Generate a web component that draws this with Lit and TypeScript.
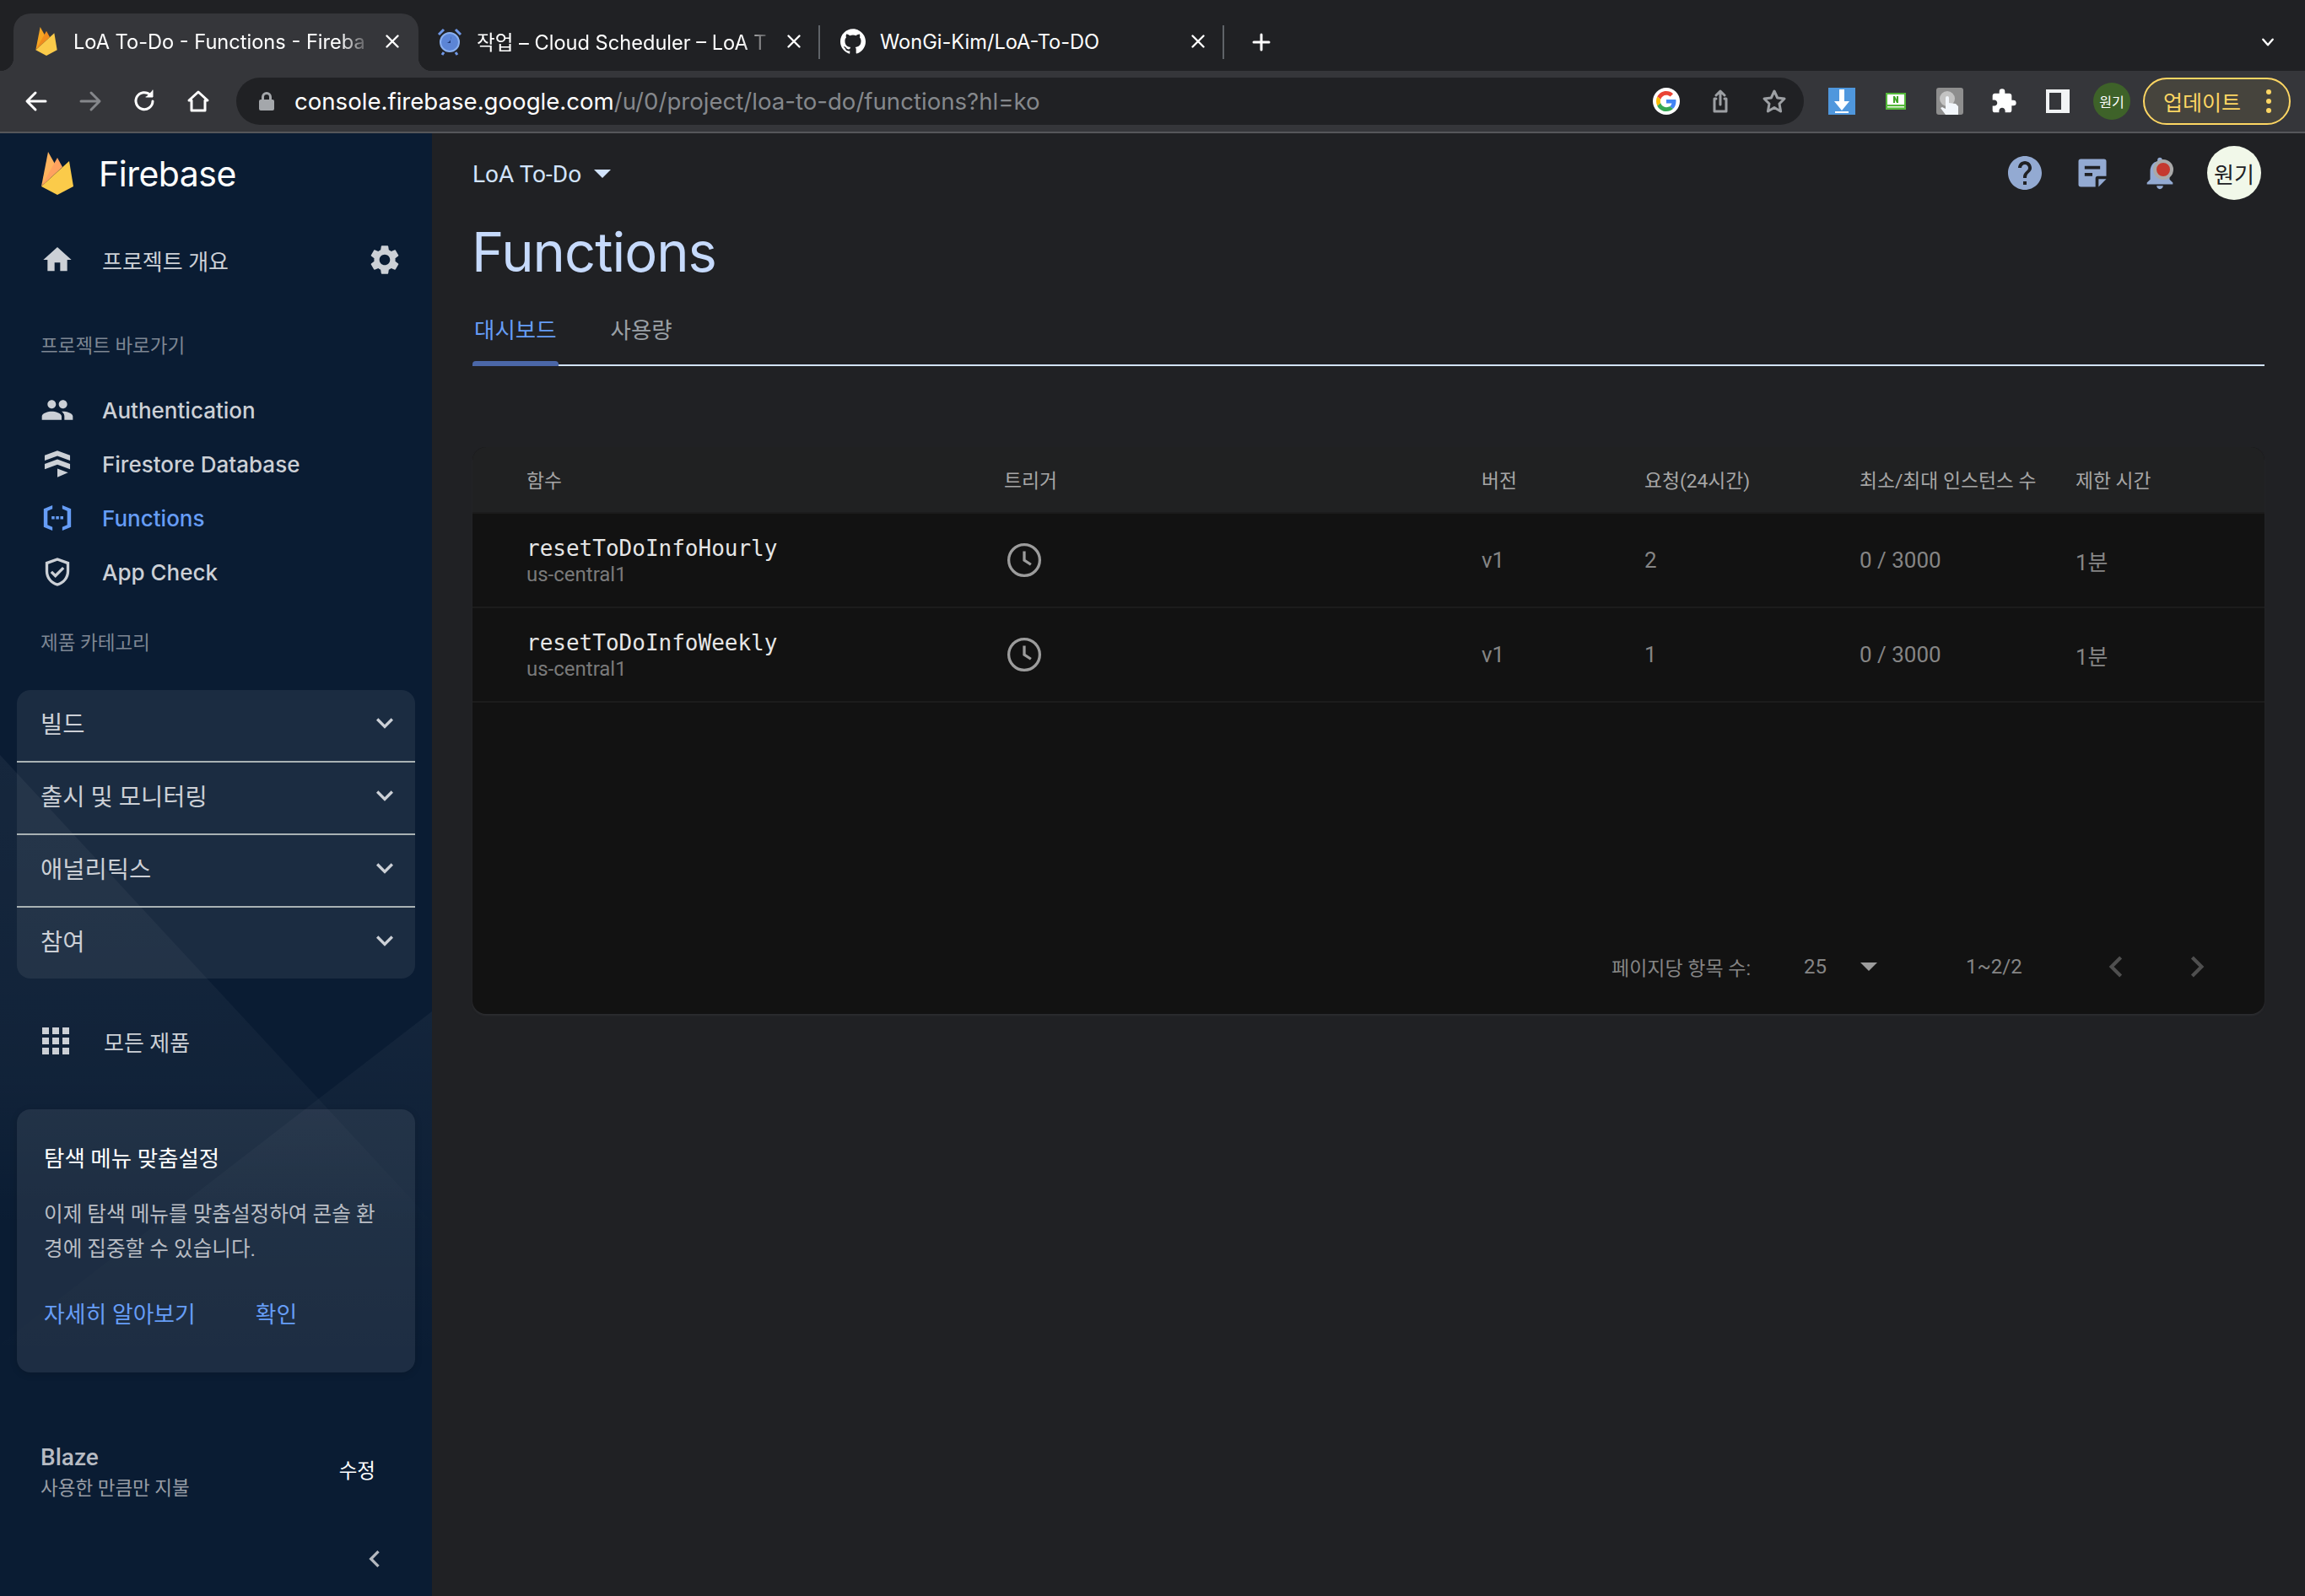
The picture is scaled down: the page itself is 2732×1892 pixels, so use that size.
import { LitElement, css, html, svg } from "lit";
import { customElement } from "lit/decorators.js";

const P = {
  home: "M10 20v-6h4v6h5v-8h3L12 3 2 12h3v8z",
  gear: "M19.14 12.94c.04-.3.06-.61.06-.94 0-.32-.02-.64-.07-.94l2.03-1.58c.18-.14.23-.41.12-.61l-1.92-3.32c-.12-.22-.37-.29-.59-.22l-2.39.96c-.5-.38-1.03-.7-1.62-.94l-.36-2.54c-.04-.24-.24-.41-.48-.41h-3.84c-.24 0-.43.17-.47.41l-.36 2.54c-.59.24-1.13.57-1.62.94l-2.39-.96c-.22-.08-.47 0-.59.22L2.74 8.87c-.12.21-.08.47.12.61l2.03 1.58c-.05.3-.09.63-.09.94s.02.64.07.94l-2.03 1.58c-.18.14-.23.41-.12.61l1.92 3.32c.12.22.37.29.59.22l2.39-.96c.5.38 1.03.7 1.62.94l.36 2.54c.05.24.24.41.48.41h3.84c.24 0 .44-.17.47-.41l.36-2.54c.59-.24 1.13-.56 1.62-.94l2.39.96c.22.08.47 0 .59-.22l1.92-3.32c.12-.22.07-.47-.12-.61l-2.01-1.58zM12 15.6c-1.98 0-3.6-1.62-3.6-3.6s1.62-3.6 3.6-3.6 3.6 1.62 3.6 3.6-1.62 3.6-3.6 3.6z",
  people: "M16 11c1.66 0 2.99-1.34 2.99-3S17.66 5 16 5c-1.66 0-3 1.34-3 3s1.34 3 3 3zm-8 0c1.66 0 2.99-1.34 2.99-3S9.66 5 8 5C6.34 5 5 6.34 5 8s1.34 3 3 3zm0 2c-2.33 0-7 1.17-7 3.5V19h14v-2.5c0-2.33-4.67-3.5-7-3.5zm8 0c-.29 0-.62.02-.97.05 1.16.84 1.97 1.97 1.97 3.45V19h6v-2.5c0-2.33-4.67-3.5-7-3.5z",
  firestore: "M12 2l9.500 3.600v3.900L12 6 2.500 9.500V5.600zM12 8.500l9.500 3.500v4L12 12.500 2.500 16v-4zM12 15.500l8 3L12 22z",
  functions: "M8.500 3v2.600L5 7v10l3.500 1.400V21l-6.200-2.500v-13zM15.500 3l6.200 2.500v13L15.500 21v-2.600L19 17V7l-3.500-1.400zM7.900 10.800h2.100v2.100H7.900zM11 10.800h2.100v2.100H11zM14.100 10.800h2.100v2.100h-2.100z",
  shield: "M12 2L3.500 5v6.500c0 5 3.600 9.200 8.500 10.500 4.900-1.300 8.500-5.500 8.500-10.500V5zm6.500 9.500c0 4-2.800 7.400-6.500 8.500-3.700-1.100-6.500-4.500-6.500-8.500V6.400L12 4.100l6.500 2.300zM8.400 11.200L7 12.600l3.600 3.600 6.400-6.400-1.400-1.400-5 5z",
  expand: "M16.590 8.590L12 13.170 7.410 8.590 6 10l6 6 6-6z",
  left: "M15.410 7.410L14 6l-6 6 6 6 1.410-1.410L10.830 12z",
  right: "M10 6L8.590 7.410 13.170 12l-4.580 4.590L10 18l6-6z",
  help: "M12 2C6.480 2 2 6.480 2 12s4.480 10 10 10 10-4.480 10-10S17.520 2 12 2zm1 17h-2v-2h2v2zm2.070-7.750l-.9.920C13.450 12.900 13 13.500 13 15h-2v-.5c0-1.100.450-2.100 1.170-2.830l1.240-1.260c.370-.360.590-.860.590-1.410 0-1.100-.9-2-2-2s-2 .9-2 2H8c0-2.210 1.790-4 4-4s4 1.790 4 4c0 .880-.360 1.680-.930 2.250z",
  note: "M4.500 3h15A1.500 1.500 0 0 1 21 4.500V14h-5.500A1.500 1.500 0 0 0 14 15.500V21H4.500A1.500 1.500 0 0 1 3 19.500v-15A1.500 1.500 0 0 1 4.500 3zM7 7.500v2h10v-2zM7 12v2h5v-2zM16 16h5l-5 5z",
  bell: "M12 22c1.100 0 2-.9 2-2h-4c0 1.100.9 2 2 2zm6-6v-5c0-3.070-1.630-5.640-4.500-6.320V4c0-.830-.670-1.500-1.500-1.500s-1.500.670-1.500 1.500v.680C7.640 5.360 6 7.920 6 11v5l-2 2v1h16v-1l-2-2z",
  github: "M12 .297c-6.630 0-12 5.373-12 12 0 5.303 3.438 9.800 8.205 11.385.6.113.82-.258.82-.577 0-.285-.01-1.040-.015-2.040-3.338.724-4.042-1.610-4.042-1.610C4.422 18.070 3.633 17.700 3.633 17.700c-1.087-.744.084-.729.084-.729 1.205.084 1.838 1.236 1.838 1.236 1.070 1.835 2.809 1.305 3.495.998.108-.776.417-1.305.76-1.605-2.665-.3-5.466-1.332-5.466-5.930 0-1.310.465-2.380 1.235-3.220-.135-.303-.54-1.523.105-3.176 0 0 1.005-.322 3.300 1.230.96-.267 1.980-.399 3-.405 1.020.006 2.040.138 3 .405 2.280-1.552 3.285-1.230 3.285-1.230.645 1.653.24 2.873.12 3.176.765.84 1.230 1.910 1.230 3.220 0 4.610-2.805 5.625-5.475 5.920.42.36.81 1.096.81 2.220 0 1.606-.015 2.896-.015 3.286 0 .315.21.69.825.57C20.565 22.092 24 17.592 24 12.297c0-6.627-5.373-12-12-12",
  puzzle: "M20.500 11H19V7c0-1.100-.9-2-2-2h-4V3.500a2.500 2.500 0 0 0-5 0V5H4c-1.100 0-2 .9-2 2v3.800h1.500c1.490 0 2.700 1.210 2.700 2.700s-1.210 2.700-2.700 2.700H2V20c0 1.100.9 2 2 2h3.800v-1.500c0-1.490 1.210-2.700 2.700-2.700s2.700 1.210 2.700 2.700V22H17c1.100 0 2-.9 2-2v-4h1.500a2.500 2.500 0 0 0 0-5z",
};

const icon = (d: string, size: number, color = "currentColor") => html`<svg
  width=${size}
  height=${size}
  viewBox="0 0 24 24"
  fill=${color}
>
  <path d=${d}></path>
</svg>`;

const flame = (w: number, h: number, dim = false) => html`<svg width=${w} height=${h} viewBox="0 0 38 51">
  <path d="M0 41L8 0l9 16z" fill=${dim ? "#f6a623" : "#ffb45e"}></path>
  <path d="M0 41L19 7l6 11z" fill=${dim ? "#f08c1d" : "#ffa25f"}></path>
  <path d="M0 41L33 11l5 30-19 10z" fill="#fbcb4a"></path>
</svg>`;

const googleG = html`<svg width="24" height="24" viewBox="0 0 48 48">
  <path fill="#EA4335" d="M24 9.500c3.540 0 6.710 1.220 9.210 3.600l6.850-6.850C35.900 2.380 30.470 0 24 0 14.620 0 6.510 5.380 2.560 13.220l7.980 6.190C12.430 13.720 17.740 9.500 24 9.500z"></path>
  <path fill="#4285F4" d="M46.980 24.550c0-1.570-.15-3.090-.38-4.550H24v9.020h12.940c-.58 2.960-2.260 5.480-4.780 7.180l7.730 6c4.510-4.180 7.090-10.360 7.090-17.650z"></path>
  <path fill="#FBBC05" d="M10.530 28.590c-.48-1.450-.76-2.990-.76-4.590s.27-3.140.76-4.590l-7.980-6.190C.92 16.460 0 20.120 0 24c0 3.880.92 7.540 2.560 10.780l7.970-6.190z"></path>
  <path fill="#34A853" d="M24 48c6.480 0 11.930-2.130 15.890-5.810l-7.730-6c-2.150 1.450-4.920 2.300-8.160 2.300-6.260 0-11.570-4.220-13.470-9.910l-7.980 6.190C6.510 42.620 14.620 48 24 48z"></path>
</svg>`;

const stroke = (body: unknown, size = 32) => html`<svg
  width=${size}
  height=${size}
  viewBox="0 0 32 32"
  fill="none"
  stroke="currentColor"
  stroke-width="3"
  stroke-linecap="round"
  stroke-linejoin="round"
>
  ${body}
</svg>`;

const closeIcon = () => stroke(svg`<path d="M8 8l16 16M24 8L8 24"></path>`, 26);

const SHORTCUTS = [
  { label: "Authentication", path: P.people, size: 40 },
  { label: "Firestore Database", path: P.firestore, size: 38 },
  { label: "Functions", path: P.functions, size: 46, active: true },
  { label: "App Check", path: P.shield, size: 42 },
];
const CATEGORIES = ["빌드", "출시 및 모니터링", "애널리틱스", "참여"];
const COLUMNS = ["함수", "트리거", "버전", "요청(24시간)", "최소/최대 인스턴스 수", "제한 시간"];
const FUNCTIONS = [
  { name: "resetToDoInfoHourly", requests: "2" },
  { name: "resetToDoInfoWeekly", requests: "1" },
];

@customElement("app-root")
export class AppRoot extends LitElement {
  static styles = css`
    :host {
      display: block;
      width: 2732px;
      height: 1892px;
      overflow: hidden;
      background: #202124;
      font-family: Roboto, "Noto Sans CJK KR", sans-serif;
      color: #e8eaed;
    }
    button {
      all: unset;
      display: flex;
      align-items: center;
      justify-content: center;
    }

    /* browser chrome */
    .tabstrip {
      height: 84px;
      display: flex;
      align-items: flex-end;
      padding-left: 16px;
      background: #202124;
      color: #fff;
      font-family: Inter, "Noto Sans CJK KR", sans-serif;
      font-size: 23.6px;
    }
    .tab {
      position: relative;
      box-sizing: border-box;
      height: 68px;
      width: 476px;
      display: flex;
      align-items: center;
      padding: 0 15px 2px 22px;
    }
    .tab.active {
      width: 480px;
      padding-left: 24px;
      background: #35363a;
      border-radius: 20px 20px 0 0;
    }
    .tab.last {
      width: 479px;
      padding-left: 24px;
    }
    .tab.active::before,
    .tab.active::after {
      content: "";
      position: absolute;
      bottom: 0;
      width: 16px;
      height: 16px;
    }
    .tab.active::before {
      left: -16px;
      background: radial-gradient(circle at 0 0, transparent 16px, #35363a 16.5px);
    }
    .tab.active::after {
      right: -16px;
      background: radial-gradient(circle at 100% 0, transparent 16px, #35363a 16.5px);
    }
    .tab.sep::after {
      content: "";
      position: absolute;
      right: 0;
      top: 14px;
      height: 40px;
      width: 2px;
      background: #5f6368;
    }
    .favicon {
      width: 30px;
      flex: none;
      display: flex;
      justify-content: center;
      margin-right: 17px;
    }
    .tab-title {
      flex: 1;
      min-width: 0;
      white-space: nowrap;
    }
    .tab-title.fade {
      -webkit-mask-image: linear-gradient(90deg, #000 calc(100% - 46px), transparent calc(100% - 8px));
      mask-image: linear-gradient(90deg, #000 calc(100% - 46px), transparent calc(100% - 8px));
    }
    .tab-close {
      flex: none;
      width: 32px;
    }
    .newtab {
      width: 88px;
      height: 68px;
    }
    .tab-spacer {
      flex: 1;
    }
    .tablist {
      width: 88px;
      height: 68px;
    }
    .toolbar {
      box-sizing: border-box;
      height: 74px;
      display: flex;
      align-items: flex-start;
      padding: 8px 17px 0 11px;
      background: #35363a;
      border-bottom: 2px solid #55565a;
      color: #fff;
    }
    .tool {
      flex: none;
      width: 64px;
      height: 56px;
    }
    .tool.off {
      color: #85878b;
    }
    .omnibox {
      flex: 1;
      height: 56px;
      margin: 0 13px;
      padding: 0 3px 0 24px;
      display: flex;
      align-items: center;
      border-radius: 28px;
      background: #202124;
    }
    .lock {
      width: 24px;
      display: flex;
      justify-content: center;
      margin-right: 21px;
      color: #a4a7ab;
    }
    .url {
      flex: 1;
      font-family: Inter, sans-serif;
      font-size: 27.6px;
      color: #85888c;
      white-space: nowrap;
    }
    .url b {
      font-weight: 400;
      color: #fff;
    }
    .omni-icon {
      color: #9da0a4;
    }
    .g-badge {
      width: 32px;
      height: 32px;
      border-radius: 50%;
      background: #fff;
      display: flex;
      align-items: center;
      justify-content: center;
    }
    .ext-avatar {
      width: 44px;
      height: 44px;
      border-radius: 50%;
      background: #3e6229;
      display: flex;
      align-items: center;
      justify-content: center;
      font-size: 16px;
      color: #fff;
    }
    .update {
      flex: none;
      box-sizing: border-box;
      width: 175px;
      height: 56px;
      margin-left: 5px;
      padding: 0 10px 0 22px;
      display: flex;
      align-items: center;
      justify-content: space-between;
      border: 2px solid #fdd663;
      border-radius: 28px;
      background: #46443d;
      color: #fdd663;
      font-size: 25px;
    }
    .dots {
      display: flex;
      flex-direction: column;
      gap: 5px;
      margin-right: 11px;
    }
    .dots i {
      width: 6px;
      height: 6px;
      border-radius: 50%;
      background: #fdd663;
    }

    /* page */
    .page {
      display: flex;
      height: 1734px;
    }
    .sidebar {
      position: relative;
      flex: none;
      box-sizing: border-box;
      width: 512px;
      overflow: hidden;
      background: #0a1c33;
      color: #ccd0d6;
    }
    .sidebar-bg {
      position: absolute;
      inset: 0;
      pointer-events: none;
    }
    .sidebar-content {
      position: relative;
    }
    .brand {
      height: 94px;
      display: flex;
      align-items: center;
      gap: 30px;
      padding-left: 49px;
      font-family: Inter, sans-serif;
      font-size: 41px;
      letter-spacing: -0.5px;
      color: #fff;
    }
    .brand span {
      margin-top: 2px;
    }
    .row {
      height: 64px;
      display: flex;
      align-items: center;
      padding-left: 48px;
      font-size: 26px;
    }
    .row-icon {
      flex: none;
      width: 40px;
      margin-right: 33px;
      display: flex;
      justify-content: center;
    }
    .overview {
      margin-top: 24px;
      padding-right: 35px;
    }
    .overview .label {
      flex: 1;
    }
    .group-label {
      height: 44px;
      display: flex;
      align-items: center;
      padding-left: 48px;
      font-size: 22.5px;
      color: #7e8794;
    }
    .group-label.first {
      margin-top: 46px;
      margin-bottom: 24px;
    }
    .group-label.second {
      margin-top: 28px;
      margin-bottom: 36px;
    }
    .nav-row {
      font-family: Inter, sans-serif;
      font-weight: 500;
    }
    .nav-row.active {
      color: #669df6;
    }
    .accordion {
      margin: 0 20px;
      border-radius: 16px;
      background: rgba(255, 255, 255, 0.07);
    }
    .accordion-row {
      box-sizing: border-box;
      height: 86px;
      display: flex;
      align-items: center;
      justify-content: space-between;
      padding: 0 16px 7px 28px;
      font-size: 28.5px;
      border-bottom: 2px solid #a9b2b4;
    }
    .accordion-row:last-child {
      height: 84px;
      border-bottom: 0;
    }
    .all-products {
      margin-top: 42px;
      margin-bottom: 1px;
    }
    .all-products .row-icon {
      margin-left: -2px;
      margin-right: 37px;
    }
    .customize {
      box-sizing: border-box;
      height: 312px;
      margin: 49px 20px 0;
      padding: 39px 32px 0;
      border-radius: 16px;
      background: rgba(255, 255, 255, 0.08);
      box-shadow: 0 2px 8px rgba(0, 0, 0, 0.15);
    }
    .customize h3 {
      margin: 0;
      font-size: 26.5px;
      font-weight: 400;
      line-height: 40px;
      color: #fff;
    }
    .customize p {
      margin: 25px 0 0;
      font-size: 24.6px;
      line-height: 41px;
      color: #b9bdc4;
      white-space: nowrap;
    }
    .links {
      display: flex;
      gap: 71px;
      margin-top: 38px;
      font-size: 26.9px;
      line-height: 40px;
      color: #669df6;
    }
    .plan {
      display: flex;
      align-items: center;
      justify-content: space-between;
      margin-top: 84px;
      padding: 0 67px 0 48px;
    }
    .plan-name {
      font-size: 28px;
      font-weight: 500;
      line-height: 34px;
      color: #b7bbc3;
    }
    .plan-sub {
      margin-top: 2px;
      font-size: 22.5px;
      line-height: 34px;
      color: #989da5;
    }
    .plan-edit {
      margin-bottom: 8px;
      font-size: 23.5px;
      color: #fff;
    }
    .collapse {
      display: flex;
      justify-content: flex-end;
      margin-top: 47px;
      padding-right: 48px;
      color: #b4b8bf;
    }

    .main {
      flex: 1;
      min-width: 0;
      padding: 0 48px;
    }
    .topbar {
      height: 94px;
      display: flex;
      align-items: center;
    }
    .project {
      flex: 1;
      display: flex;
      align-items: center;
      gap: 15px;
      padding-top: 2px;
      font-size: 28px;
      color: #d2e3fc;
    }
    .caret {
      width: 0;
      height: 0;
      border-left: 10px solid transparent;
      border-right: 10px solid transparent;
      border-top: 10px solid #d2e3fc;
    }
    .top-icon {
      position: relative;
      width: 80px;
      display: flex;
      justify-content: center;
      color: #93aad2;
    }
    .bell-dot {
      position: absolute;
      top: 7px;
      left: 32px;
      box-sizing: border-box;
      width: 24px;
      height: 24px;
      border: 4px solid #a9a9a9;
      border-radius: 50%;
      background: #c5392f;
    }
    .avatar {
      width: 64px;
      height: 64px;
      margin-left: 16px;
      margin-right: 4px;
      border-radius: 50%;
      background: #f1f8e9;
      display: flex;
      align-items: center;
      justify-content: center;
      font-size: 26px;
      color: #202124;
    }
    h1 {
      margin: 7px 0 0 -1px;
      font-family: Inter, sans-serif;
      font-size: 65px;
      font-weight: 400;
      line-height: 80px;
      letter-spacing: -1px;
      color: #c6dafc;
    }
    .tabs {
      box-sizing: border-box;
      height: 95px;
      display: flex;
      align-items: flex-end;
      gap: 60px;
      border-bottom: 2px solid #d2e3fc;
      font-size: 26.5px;
      color: #9aa0a6;
    }
    .page-tab {
      position: relative;
      height: 85px;
      padding: 0 2px;
      display: flex;
      align-items: center;
      box-sizing: border-box;
    }
    .page-tab.active {
      color: #669df6;
    }
    .page-tab.active::after {
      content: "";
      position: absolute;
      left: 0;
      right: 0;
      bottom: -2px;
      height: 6px;
      border-radius: 4px 4px 0 0;
      background: #4b67a8;
    }
    .table {
      box-sizing: border-box;
      height: 672px;
      margin-top: 96px;
      display: flex;
      flex-direction: column;
      border-radius: 16px;
      overflow: hidden;
      background: #121212;
      box-shadow: 0 2px 2px #2c2d30;
    }
    .tr {
      display: grid;
      grid-template-columns: 566px 566px 193px 255px 256px 1fr;
      align-items: center;
      padding-left: 64px;
      box-sizing: border-box;
      border-bottom: 2px solid #1c1c1c;
    }
    .thead {
      height: 79px;
      background: #202122;
      border-bottom-color: #1b1b1c;
      font-size: 22.8px;
      color: #a6a6a6;
    }
    .tbody {
      height: 112px;
      font-size: 26px;
      color: #858585;
    }
    .fn-cell {
      padding-top: 2px;
    }
    .fn-name {
      font-family: "DejaVu Sans Mono", monospace;
      font-size: 26px;
      line-height: 32px;
      color: #e6e6e6;
    }
    .fn-region {
      font-size: 24px;
      line-height: 30px;
      color: #7a7a7a;
    }
    .clock {
      color: #9c9c9c;
      display: flex;
      padding-left: 3px;
    }
    .pager {
      margin-top: auto;
      height: 112px;
      display: flex;
      align-items: center;
      padding-left: 1350px;
      font-size: 23px;
      color: #858585;
    }
    .pager .per-page {
      width: 228px;
    }
    .pager .size {
      width: 67px;
      font-size: 24px;
    }
    .pager .tri {
      width: 0;
      height: 0;
      border-left: 10px solid transparent;
      border-right: 10px solid transparent;
      border-top: 10px solid #9c9c9c;
      margin-right: 105px;
    }
    .pager .range {
      width: 153px;
      font-size: 24px;
    }
    .pager .nav {
      width: 96px;
      display: flex;
      color: #4f4f4f;
    }
  `;

  private renderSidebarBg() {
    return svg`<svg class="sidebar-bg" width="512" height="1734" viewBox="0 0 512 1734">
      <defs>
        <linearGradient id="fadeA" x1="0" y1="700" x2="0" y2="1300" gradientUnits="userSpaceOnUse">
          <stop offset="0" stop-color="#fff" stop-opacity=".05"></stop>
          <stop offset=".7" stop-color="#fff" stop-opacity=".03"></stop>
          <stop offset="1" stop-color="#fff" stop-opacity="0"></stop>
        </linearGradient>
        <linearGradient id="fadeB" x1="0" y1="1040" x2="0" y2="1460" gradientUnits="userSpaceOnUse">
          <stop offset="0" stop-color="#fff" stop-opacity=".04"></stop>
          <stop offset="1" stop-color="#fff" stop-opacity="0"></stop>
        </linearGradient>
      </defs>
      <polygon points="0,737 512,1290 0,1340" fill="url(#fadeA)"></polygon>
      <polygon points="512,1041 0,1436 512,1460" fill="url(#fadeB)"></polygon>
    </svg>`;
  }

  private renderChrome() {
    return html`
      <div class="tabstrip">
        <div class="tab active">
          <span class="favicon">${flame(26, 34, true)}</span>
          <span class="tab-title fade">LoA To-Do - Functions - Fireba</span>
          <button class="tab-close">${closeIcon()}</button>
        </div>
        <div class="tab sep">
          <span class="favicon">
            <svg width="30" height="34" viewBox="0 0 30 34">
              <circle cx="15" cy="18" r="11" fill="#5c85d6" stroke="#8ab0f0" stroke-width="2"></circle>
              <path d="M16 11v8h-6a6 6 0 0 0 6-8z" fill="#1f3a78"></path>
              <path d="M2 9l6-6M28 9l-6-6M8 30l-2 3M22 30l2 3" stroke="#6f97e6" stroke-width="3" fill="none"></path>
            </svg>
          </span>
          <span class="tab-title fade">작업 – Cloud Scheduler – LoA T</span>
          <button class="tab-close">${closeIcon()}</button>
        </div>
        <div class="tab sep last">
          <span class="favicon">${icon(P.github, 32, "#fff")}</span>
          <span class="tab-title">WonGi-Kim/LoA-To-DO</span>
          <button class="tab-close">${closeIcon()}</button>
        </div>
        <button class="newtab">${stroke(svg`<path d="M16 7v18M7 16h18"></path>`, 32)}</button>
        <span class="tab-spacer"></span>
        <button class="tablist">${stroke(svg`<path d="M9 12l7 8 7-8"></path>`, 26)}</button>
      </div>
      <div class="toolbar">
        <button class="tool">${stroke(svg`<path d="M27 16H6M15 6L5 16l10 10"></path>`)}</button>
        <button class="tool off">${stroke(svg`<path d="M5 16h21M17 6l10 10-10 10"></path>`)}</button>
        <button class="tool">
          ${stroke(svg`<path d="M26 16a10 10 0 1 1-3-7.500"></path><path d="M26 3v8h-8" fill="#fff" stroke-width="1"></path>`)}
        </button>
        <button class="tool">
          ${stroke(svg`<path d="M5 15L16 5l11 10h-3v12H8V15z"></path>`)}
        </button>
        <div class="omnibox">
          <span class="lock">
            <svg width="18" height="24" viewBox="0 0 18 24" fill="currentColor">
              <path d="M3 10V7a6 6 0 0 1 12 0v3h1a2 2 0 0 1 2 2v9a2 2 0 0 1-2 2H2a2 2 0 0 1-2-2v-9a2 2 0 0 1 2-2zm3 0h6V7a3 3 0 0 0-6 0z"></path>
            </svg>
          </span>
          <span class="url"><b>console.firebase.google.com</b>/u/0/project/loa-to-do/functions?hl=ko</span>
          <button class="tool"><span class="g-badge">${googleG}</span></button>
          <button class="tool omni-icon">
            ${stroke(svg`<path d="M11 13H9v15h14V13h-2M16 20V4M11 9l5-5 5 5"></path>`)}
          </button>
          <button class="tool omni-icon">
            ${stroke(svg`<path d="M16 4l3.700 8 8.300 1-6 6 1.600 9L16 23.500 8.400 28 10 19l-6-6 8.300-1z"></path>`)}
          </button>
        </div>
        <button class="tool">
          <svg width="32" height="32" viewBox="0 0 32 32">
            <rect width="32" height="32" fill="#4f97dd"></rect>
            <path d="M13 2h6v14h6l-9 11-9-11h6z" fill="#fff"></path>
            <rect x="8" y="28" width="16" height="2" fill="#fff"></rect>
          </svg>
        </button>
        <button class="tool">
          <svg width="24" height="20" viewBox="0 0 24 20">
            <rect width="24" height="20" fill="#55b93b"></rect>
            <rect x="2" y="2" width="20" height="12" fill="#fff"></rect>
            <path d="M9 4h2l2 4V4h2v8h-2l-2-4v4H9z" fill="#3fa327"></path>
            <rect x="2" y="16" width="20" height="1.500" fill="#e8f5e0"></rect>
          </svg>
        </button>
        <button class="tool">
          <svg width="32" height="32" viewBox="0 0 32 32">
            <rect width="32" height="32" rx="3" fill="#8e8e8e"></rect>
            <circle cx="13" cy="13" r="9" fill="#c3c3c3"></circle>
            <path d="M11 12a2 2 0 0 1 4 0v6l8 1 3 3v10H11l-6-8 2-1 4 2z" fill="#f2f6fb"></path>
          </svg>
        </button>
        <button class="tool">${icon(P.puzzle, 32, "#fff")}</button>
        <button class="tool">
          <svg width="28" height="28" viewBox="0 0 28 28">
            <path d="M0 0h28v28H0zM4 4v20h14V4z" fill="#f1f3f4" fill-rule="evenodd"></path>
          </svg>
        </button>
        <button class="tool"><span class="ext-avatar">원기</span></button>
        <div class="update">
          <span>업데이트</span>
          <span class="dots"><i></i><i></i><i></i></span>
        </div>
      </div>
    `;
  }

  private renderSidebar() {
    return html`
      <aside class="sidebar">
        ${this.renderSidebarBg()}
        <div class="sidebar-content">
          <div class="brand">${flame(38, 51)}<span>Firebase</span></div>
          <div class="row overview">
            <span class="row-icon">${icon(P.home, 42)}</span>
            <span class="label">프로젝트 개요</span>
            ${icon(P.gear, 42)}
          </div>
          <div class="group-label first">프로젝트 바로가기</div>
          ${SHORTCUTS.map(
            (s) => html`
              <div class="row nav-row ${s.active ? "active" : ""}">
                <span class="row-icon">${icon(s.path, s.size)}</span>
                <span>${s.label}</span>
              </div>
            `
          )}
          <div class="group-label second">제품 카테고리</div>
          <div class="accordion">
            ${CATEGORIES.map(
              (c) => html`
                <div class="accordion-row"><span>${c}</span>${icon(P.expand, 40)}</div>
              `
            )}
          </div>
          <div class="row all-products">
            <span class="row-icon">
              <svg width="32" height="32" viewBox="0 0 32 32" fill="currentColor">
                ${[0, 12, 24].map((y) =>
                  [0, 12, 24].map((x) => svg`<rect x=${x} y=${y} width="8" height="8"></rect>`)
                )}
              </svg>
            </span>
            <span>모든 제품</span>
          </div>
          <div class="customize">
            <h3>탐색 메뉴 맞춤설정</h3>
            <p>이제 탐색 메뉴를 맞춤설정하여 콘솔 환<br />경에 집중할 수 있습니다.</p>
            <div class="links"><span>자세히 알아보기</span><span>확인</span></div>
          </div>
          <div class="plan">
            <div>
              <div class="plan-name">Blaze</div>
              <div class="plan-sub">사용한 만큼만 지불</div>
            </div>
            <span class="plan-edit">수정</span>
          </div>
          <div class="collapse">${icon(P.left, 40)}</div>
        </div>
      </aside>
    `;
  }

  private renderTable() {
    return html`
      <div class="table">
        <div class="tr thead">${COLUMNS.map((c) => html`<span>${c}</span>`)}</div>
        ${FUNCTIONS.map(
          (f) => html`
            <div class="tr tbody">
              <div class="fn-cell">
                <div class="fn-name">${f.name}</div>
                <div class="fn-region">us-central1</div>
              </div>
              <span class="clock">
                ${stroke(svg`<circle cx="16" cy="16" r="14" stroke-width="2.500"></circle><path d="M16 8v8l6 4" stroke-width="2.500" stroke-linecap="butt" stroke-linejoin="miter"></path>`, 42)}
              </span>
              <span>v1</span>
              <span>${f.requests}</span>
              <span>0 / 3000</span>
              <span>1분</span>
            </div>
          `
        )}
        <div class="pager">
          <span class="per-page">페이지당 항목 수:</span>
          <span class="size">25</span>
          <span class="tri"></span>
          <span class="range">1~2/2</span>
          <span class="nav">${icon(P.left, 50)}</span>
          <span class="nav">${icon(P.right, 50)}</span>
        </div>
      </div>
    `;
  }

  render() {
    return html`
      ${this.renderChrome()}
      <div class="page">
        ${this.renderSidebar()}
        <main class="main">
          <div class="topbar">
            <div class="project"><span>LoA To-Do</span><span class="caret"></span></div>
            <span class="top-icon">${icon(P.help, 48)}</span>
            <span class="top-icon">${icon(P.note, 44)}</span>
            <span class="top-icon">${icon(P.bell, 46)}<i class="bell-dot"></i></span>
            <span class="avatar">원기</span>
          </div>
          <h1>Functions</h1>
          <div class="tabs">
            <div class="page-tab active"><span>대시보드</span></div>
            <div class="page-tab"><span>사용량</span></div>
          </div>
          ${this.renderTable()}
        </main>
      </div>
    `;
  }
}
